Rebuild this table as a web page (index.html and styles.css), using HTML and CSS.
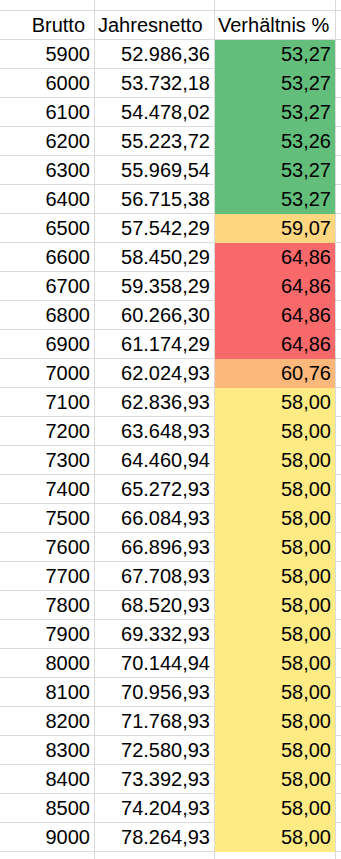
FILE: index.html
```html
<!DOCTYPE html>
<html lang="de">
<head>
<meta charset="utf-8">
<title>Brutto / Jahresnetto</title>
<link rel="stylesheet" href="styles.css">
</head>
<body>
<div class="sheet">
  <div class="row top"><div class="c a"></div><div class="c b"></div><div class="c v"></div><div class="c d"></div></div>
  <div class="row"><div class="c a head-a">Brutto</div><div class="c b left">Jahresnetto</div><div class="c v left">Verhältnis %</div><div class="c d"></div></div>
  <div class="row"><div class="c a">5900</div><div class="c b">52.986,36</div><div class="c v green">53,27</div><div class="c d"></div></div>
  <div class="row"><div class="c a">6000</div><div class="c b">53.732,18</div><div class="c v green">53,27</div><div class="c d"></div></div>
  <div class="row"><div class="c a">6100</div><div class="c b">54.478,02</div><div class="c v green">53,27</div><div class="c d"></div></div>
  <div class="row"><div class="c a">6200</div><div class="c b">55.223,72</div><div class="c v green">53,26</div><div class="c d"></div></div>
  <div class="row"><div class="c a">6300</div><div class="c b">55.969,54</div><div class="c v green">53,27</div><div class="c d"></div></div>
  <div class="row"><div class="c a">6400</div><div class="c b">56.715,38</div><div class="c v green">53,27</div><div class="c d"></div></div>
  <div class="row"><div class="c a">6500</div><div class="c b">57.542,29</div><div class="c v light-orange">59,07</div><div class="c d"></div></div>
  <div class="row"><div class="c a">6600</div><div class="c b">58.450,29</div><div class="c v red">64,86</div><div class="c d"></div></div>
  <div class="row"><div class="c a">6700</div><div class="c b">59.358,29</div><div class="c v red">64,86</div><div class="c d"></div></div>
  <div class="row"><div class="c a">6800</div><div class="c b">60.266,30</div><div class="c v red">64,86</div><div class="c d"></div></div>
  <div class="row"><div class="c a">6900</div><div class="c b">61.174,29</div><div class="c v red">64,86</div><div class="c d"></div></div>
  <div class="row"><div class="c a">7000</div><div class="c b">62.024,93</div><div class="c v orange">60,76</div><div class="c d"></div></div>
  <div class="row"><div class="c a">7100</div><div class="c b">62.836,93</div><div class="c v yellow">58,00</div><div class="c d"></div></div>
  <div class="row"><div class="c a">7200</div><div class="c b">63.648,93</div><div class="c v yellow">58,00</div><div class="c d"></div></div>
  <div class="row"><div class="c a">7300</div><div class="c b">64.460,94</div><div class="c v yellow">58,00</div><div class="c d"></div></div>
  <div class="row"><div class="c a">7400</div><div class="c b">65.272,93</div><div class="c v yellow">58,00</div><div class="c d"></div></div>
  <div class="row"><div class="c a">7500</div><div class="c b">66.084,93</div><div class="c v yellow">58,00</div><div class="c d"></div></div>
  <div class="row"><div class="c a">7600</div><div class="c b">66.896,93</div><div class="c v yellow">58,00</div><div class="c d"></div></div>
  <div class="row"><div class="c a">7700</div><div class="c b">67.708,93</div><div class="c v yellow">58,00</div><div class="c d"></div></div>
  <div class="row"><div class="c a">7800</div><div class="c b">68.520,93</div><div class="c v yellow">58,00</div><div class="c d"></div></div>
  <div class="row"><div class="c a">7900</div><div class="c b">69.332,93</div><div class="c v yellow">58,00</div><div class="c d"></div></div>
  <div class="row"><div class="c a">8000</div><div class="c b">70.144,94</div><div class="c v yellow">58,00</div><div class="c d"></div></div>
  <div class="row"><div class="c a">8100</div><div class="c b">70.956,93</div><div class="c v yellow">58,00</div><div class="c d"></div></div>
  <div class="row"><div class="c a">8200</div><div class="c b">71.768,93</div><div class="c v yellow">58,00</div><div class="c d"></div></div>
  <div class="row"><div class="c a">8300</div><div class="c b">72.580,93</div><div class="c v yellow">58,00</div><div class="c d"></div></div>
  <div class="row"><div class="c a">8400</div><div class="c b">73.392,93</div><div class="c v yellow">58,00</div><div class="c d"></div></div>
  <div class="row"><div class="c a">8500</div><div class="c b">74.204,93</div><div class="c v yellow">58,00</div><div class="c d"></div></div>
  <div class="row"><div class="c a">9000</div><div class="c b">78.264,93</div><div class="c v yellow">58,00</div><div class="c d"></div></div>
  <div class="row bottom"><div class="c a"></div><div class="c b"></div><div class="c v"></div><div class="c d"></div></div>
</div>
</body>
</html>
```

FILE: styles.css
```css
html, body {
  margin: 0;
  padding: 0;
  background: #ffffff;
}

body {
  width: 341px;
  height: 859px;
  overflow: hidden;
  font-family: "Liberation Sans", Arial, sans-serif;
  font-size: 20px;
  color: #000000;
}

.sheet {
  display: flex;
  flex-direction: column;
}

.row {
  display: grid;
  grid-template-columns: 95px 120px 121px 1fr;
  height: 29px;
}

.row.top {
  height: 11px;
}

.row.bottom {
  height: 8px;
}

.c {
  box-sizing: border-box;
  border-right: 1px solid #dadada;
  border-bottom: 1px solid #dadada;
  padding: 1px 4px 0 3px;
  line-height: 27px;
  text-align: right;
  white-space: nowrap;
  overflow: hidden;
}

.row.bottom .c {
  border-bottom: 0;
}

.c.d {
  border-right: 0;
}

.c.left {
  text-align: left;
}

.c.head-a {
  padding-right: 9px;
}

.green {
  background: #63be7b;
  border-bottom-color: #63be7b;
}

.light-orange {
  background: #fed780;
  border-bottom-color: #fed780;
}

.red {
  background: #f8696b;
  border-bottom-color: #f8696b;
}

.orange {
  background: #fcb77a;
  border-bottom-color: #fcb77a;
}

.yellow {
  background: #ffeb84;
  border-bottom-color: #ffeb84;
}
```
